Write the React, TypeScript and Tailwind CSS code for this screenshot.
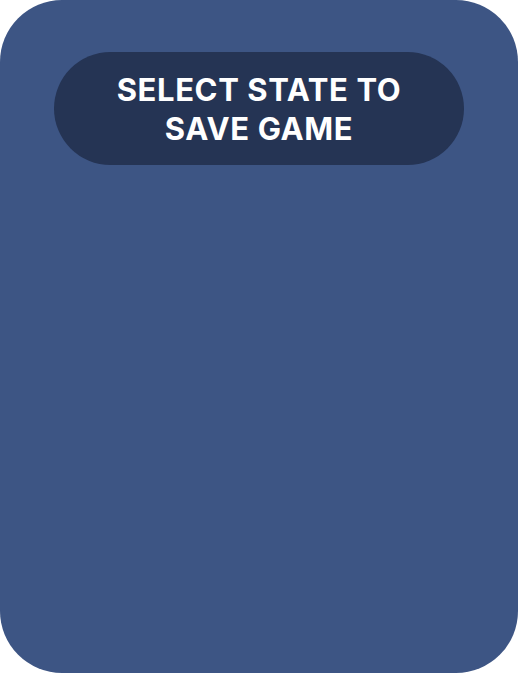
const App = () => {
  return (
    <div className="w-[518px] h-[673px] bg-white">
      <div className="w-full h-full rounded-[62px] bg-[#3d5584] flex flex-col items-center pt-[52px] px-[54px]">
        <div className="w-full h-[113px] rounded-full bg-[#253454] flex items-center justify-center">
          <h1 className="text-white text-center font-bold text-[31px] leading-[39px] tracking-[0.6px] font-['Inter',sans-serif]">
            SELECT STATE TO
            <br />
            SAVE GAME
          </h1>
        </div>
      </div>
    </div>
  );
};

export default App;
